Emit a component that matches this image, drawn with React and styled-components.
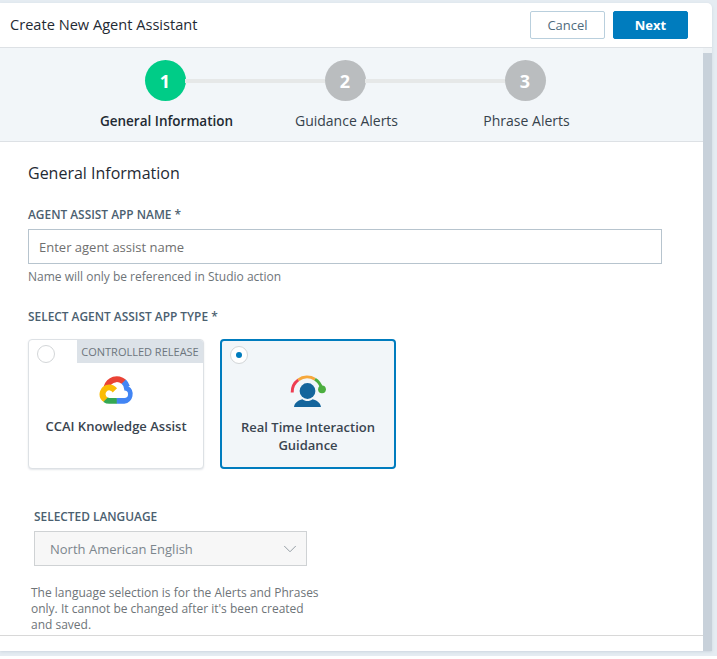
import React from 'react';
import styled, { createGlobalStyle } from 'styled-components';
import { ChevronDown } from 'lucide-react';

const GlobalStyle = createGlobalStyle`
  html, body {
    margin: 0;
    padding: 0;
    background: #fff;
    overflow: hidden;
  }
  * {
    box-sizing: border-box;
  }
  body {
    font-family: "Open Sans", "Liberation Sans", sans-serif;
  }
`;

const Frame = styled.div`
  width: 717px;
  height: 656px;
  padding: 3px 5px 5px 0;
  background: #e5ecf2;
`;

const Panel = styled.div`
  width: 712px;
  height: 648px;
  display: flex;
  flex-direction: column;
  background: #fff;
  border-top-right-radius: 5px;
  box-shadow: 0 1px 3px #cdd6df;
`;

const Header = styled.header`
  height: 45px;
  flex: none;
  display: flex;
  align-items: center;
  justify-content: space-between;
  padding: 0 24px 1px 10px;
  border-bottom: 1px solid #dde1e5;
`;

const Title = styled.h1`
  margin: 0 0 2px;
  font-size: 14.6px;
  font-weight: 400;
  color: #1f2a33;
`;

const Actions = styled.div`
  display: flex;
  gap: 8px;
`;

const Button = styled.button`
  width: 75px;
  height: 28px;
  padding: 0;
  border-radius: 2px;
  font-family: inherit;
  font-size: 13px;
  font-weight: ${({ $primary }) => ($primary ? 700 : 400)};
  color: ${({ $primary }) => ($primary ? '#fff' : '#4f6b7d')};
  background: ${({ $primary }) => ($primary ? '#007cbe' : '#fff')};
  border: 1px solid ${({ $primary }) => ($primary ? '#007cbe' : '#b9cfdd')};
`;

const Main = styled.div`
  flex: 1;
  min-height: 0;
  display: flex;
`;

const Content = styled.div`
  flex: 1;
  min-width: 0;
  display: flex;
  flex-direction: column;
`;

const Scrollbar = styled.div`
  width: 9px;
  flex: none;
  background: linear-gradient(#eef2f5 0 5px, #c8d1da 5px);
`;

const Stepper = styled.div`
  height: 94px;
  flex: none;
  display: flex;
  padding: 12px 0 0 75px;
  background: #f2f6f9;
  border-bottom: 1px solid #dde1e5;
`;

const Step = styled.div`
  position: relative;
  width: 180px;
  display: flex;
  flex-direction: column;
  align-items: center;
  &:not(:last-child)::after {
    content: '';
    position: absolute;
    top: 19px;
    left: 110px;
    width: 140px;
    height: 4px;
    background: #e6e8e8;
  }
`;

const StepCircle = styled.div`
  width: 41px;
  height: 41px;
  display: flex;
  align-items: center;
  justify-content: center;
  border-radius: 50%;
  font-size: 18px;
  font-weight: 700;
  color: #fff;
  background: ${({ $active }) => ($active ? '#00cc87' : '#babdbf')};
`;

const StepLabel = styled.div`
  margin-top: 10px;
  padding-left: 3px;
  font-size: ${({ $active }) => ($active ? 13.5 : 14)}px;
  line-height: 20px;
  color: ${({ $active }) => ($active ? '#1f2a33' : '#36424c')};
  font-weight: ${({ $active }) => ($active ? 600 : 400)};
`;

const Form = styled.div`
  flex: 1;
  min-height: 0;
  overflow: hidden;
  padding: 20px 0 0 28px;
`;

const Heading = styled.h2`
  margin: 0 0 22px;
  font-size: 16px;
  line-height: 22px;
  font-weight: 400;
  color: #1f2a33;
`;

const FieldLabel = styled.div`
  font-size: 11.9px;
  line-height: 16px;
  font-weight: 600;
  color: #4b6070;
`;

const TextInput = styled.input`
  display: block;
  width: 634px;
  height: 35px;
  margin-top: 7px;
  padding: 0 10px;
  border: 1px solid #b7c4ce;
  border-radius: 0;
  outline: none;
  font-family: inherit;
  font-size: 13px;
  &::placeholder {
    color: #6f6f6f;
    opacity: 1;
  }
`;

const Hint = styled.div`
  margin: 5px 0 23px;
  font-size: 12px;
  line-height: 16px;
  color: #6e7478;
`;

const Cards = styled.div`
  display: flex;
  gap: 16px;
  margin-top: 15px;
`;

const Card = styled.div`
  position: relative;
  width: 176px;
  height: 130px;
  display: flex;
  flex-direction: column;
  align-items: center;
  padding-top: ${({ $selected }) => ($selected ? 34 : 35)}px;
  border-radius: 4px;
  border: ${({ $selected }) => ($selected ? '2px solid #007cbe' : '1px solid #dde1e5')};
  background: ${({ $selected }) => ($selected ? '#f2f6f9' : '#fff')};
  box-shadow: ${({ $selected }) => ($selected ? 'none' : '0 1px 2px #e3e6e9')};
`;

const Radio = styled.span`
  position: absolute;
  top: 5px;
  left: 8px;
  width: 18px;
  height: 18px;
  display: flex;
  align-items: center;
  justify-content: center;
  border-radius: 50%;
  background: #fff;
  border: 1px solid #d3d6d8;
  &::after {
    content: '';
    display: ${({ $checked }) => ($checked ? 'block' : 'none')};
    width: 6px;
    height: 6px;
    border-radius: 50%;
    background: #007cbe;
  }
`;

const Badge = styled.span`
  position: absolute;
  top: 0;
  right: 0;
  width: 126px;
  height: 23px;
  display: flex;
  align-items: center;
  justify-content: center;
  font-size: 11px;
  color: #6d767d;
  background: #dce2e8;
  border-top-right-radius: 3px;
`;

const CardTitle = styled.div`
  width: 150px;
  text-align: center;
  font-size: 13px;
  line-height: 18px;
  font-weight: 600;
  color: #3a4550;
  margin-top: ${({ $mt }) => $mt}px;
`;

const Language = styled.div`
  margin: 39px 0 0 6px;
`;

const Select = styled.div`
  width: 273px;
  height: 35px;
  margin-top: 7px;
  display: flex;
  align-items: center;
  justify-content: space-between;
  padding: 0 5px 0 15px;
  background: #f7f7f7;
  border: 1px solid #cfd2d4;
  font-size: 13px;
  color: #7c868d;
`;

const Note = styled.p`
  width: 292px;
  margin: 19px 0 0 -3px;
  font-size: 12px;
  line-height: 16px;
  color: #6e7478;
`;

const Footer = styled.div`
  height: 16px;
  flex: none;
  border-top: 1px solid #d8d8d8;
`;

const GoogleCloudLogo = () => (
  <svg width="35" height="29" viewBox="1.2 2 21.6 18.4">
    <path fill="#ea4335" d="M15.19 7.57h.67l1.9-1.9.09-.8A8.54 8.54 0 0 0 3.96 9.04c.2-.09.44-.1.66-.05l3.8-.63s.19-.32.29-.3a4.74 4.74 0 0 1 6.48-.49z" />
    <path fill="#4285f4" d="M20.46 9.04a8.56 8.56 0 0 0-2.58-4.16l-2.67 2.67a4.74 4.74 0 0 1 1.74 3.76v.47a2.37 2.37 0 1 1 0 4.74h-4.75l-.47.48v2.85l.47.47h4.75a6.17 6.17 0 0 0 2.51-11.28z" />
    <path fill="#34a853" d="M7.42 20.32h4.74v-3.8H7.42c-.34 0-.67-.07-.98-.21l-.67.2-1.9 1.9-.17.67a6.14 6.14 0 0 0 3.72 1.24z" />
    <path fill="#fbbc05" d="M7.42 7.97a6.17 6.17 0 0 0-3.72 11.06l2.75-2.75a2.37 2.37 0 1 1 3.14-3.14l2.75-2.75a6.16 6.16 0 0 0-4.92-2.42z" />
  </svg>
);

const GuidanceIcon = () => (
  <svg width="36" height="32" viewBox="0 0 36 32">
    <path d="M2.2 17.5A15 15 0 0 1 8.3 4.9" fill="none" stroke="#ee3d52" strokeWidth="3" />
    <path d="M8.3 4.9A15 15 0 0 1 25 4.3" fill="none" stroke="#f6a83c" strokeWidth="3" />
    <path d="M25 4.3A15 15 0 0 1 31.5 13" fill="none" stroke="#4cae3f" strokeWidth="3" />
    <circle cx="32" cy="14.3" r="3.9" fill="#4cae3f" />
    <circle cx="17.5" cy="16" r="7.9" fill="#14659c" />
    <path d="M4 32c.6-4.5 4.2-6.6 8.4-7.8 1.4 1.2 3.2 1.8 5.1 1.8s3.7-.6 5.1-1.8c4.2 1.2 7.8 3.3 8.4 7.8z" fill="#14659c" />
  </svg>
);

const steps = [
  { n: 1, label: 'General Information', active: true },
  { n: 2, label: 'Guidance Alerts' },
  { n: 3, label: 'Phrase Alerts' },
];

export default function App() {
  return (
    <>
      <GlobalStyle />
      <Frame>
        <Panel>
          <Header>
            <Title>Create New Agent Assistant</Title>
            <Actions>
              <Button>Cancel</Button>
              <Button $primary>Next</Button>
            </Actions>
          </Header>
          <Main>
            <Content>
              <Stepper>
                {steps.map((s) => (
                  <Step key={s.n}>
                    <StepCircle $active={s.active}>{s.n}</StepCircle>
                    <StepLabel $active={s.active}>{s.label}</StepLabel>
                  </Step>
                ))}
              </Stepper>
              <Form>
                <Heading>General Information</Heading>
                <FieldLabel>AGENT ASSIST APP NAME *</FieldLabel>
                <TextInput placeholder="Enter agent assist name" />
                <Hint>Name will only be referenced in Studio action</Hint>
                <FieldLabel>SELECT AGENT ASSIST APP TYPE *</FieldLabel>
                <Cards>
                  <Card>
                    <Radio />
                    <Badge>CONTROLLED RELEASE</Badge>
                    <GoogleCloudLogo />
                    <CardTitle $mt={13}>CCAI Knowledge Assist</CardTitle>
                  </Card>
                  <Card $selected>
                    <Radio $checked />
                    <GuidanceIcon />
                    <CardTitle $mt={11}>Real Time Interaction Guidance</CardTitle>
                  </Card>
                </Cards>
                <Language>
                  <FieldLabel>SELECTED LANGUAGE</FieldLabel>
                  <Select>
                    North American English
                    <ChevronDown size={22} strokeWidth={1} color="#8b959c" />
                  </Select>
                  <Note>
                    The language selection is for the Alerts and Phrases only. It cannot be changed
                    after it's been created and saved.
                  </Note>
                </Language>
              </Form>
              <Footer />
            </Content>
            <Scrollbar />
          </Main>
        </Panel>
      </Frame>
    </>
  );
}
